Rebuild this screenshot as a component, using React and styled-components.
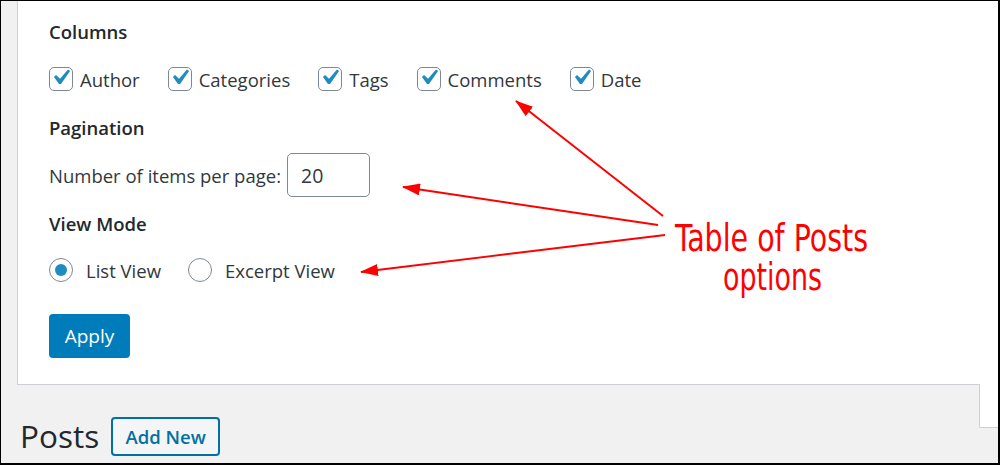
import React from 'react'
import styled, { createGlobalStyle } from 'styled-components'

const GlobalStyle = createGlobalStyle`
    body {
        margin: 0;
        font-family: "Open Sans", "Noto Sans", sans-serif;
    }
`

const Frame = styled.div`
    position: relative;
    width: 1000px;
    height: 465px;
    box-sizing: border-box;
    border-style: solid;
    border-color: #000;
    border-width: 1px 2px 2px 1px;
    background: #f1f1f1;
    overflow: hidden;
`

const Panel = styled.div`
    margin-left: 16px;
    background: #fff;
    border-left: 1px solid #ccd0d4;
    border-bottom: 1px solid #ccd0d4;
    padding: 17px 0 26px 31px;
`

const Heading = styled.h5`
    margin: ${(props) => props.top || 0}px 0 0;
    font-size: 18.5px;
    line-height: 28px;
    font-weight: 600;
    color: #23282d;
`

const Row = styled.div`
    display: flex;
    align-items: center;
    margin-top: ${(props) => props.top || 0}px;
    height: 24px;
`

const CheckLabel = styled.label`
    display: flex;
    align-items: center;
    gap: 7px;
    margin-right: 28px;
    font-size: 18.5px;
    color: #32373c;
`

const RadioLabel = styled(CheckLabel)`
    gap: 13px;
    margin-right: 27px;
`

const Box = styled.span`
    width: 24px;
    height: 24px;
    box-sizing: border-box;
    border: 1.5px solid #7e8993;
    border-radius: 5px;
    display: flex;
    align-items: center;
    justify-content: center;
    background: #fff;
    overflow: visible;

    svg {
        flex: none;
        margin: -3px 0 0 -1px;
    }
`

const Radio = styled(Box)`
    border-radius: 50%;
`

const Dot = styled.span`
    width: 12px;
    height: 12px;
    border-radius: 50%;
    background: #1e8cbe;
`

const PageRow = styled.div`
    display: flex;
    align-items: center;
    gap: 6px;
    margin-top: 11px;
    font-size: 18.5px;
    color: #32373c;
`

const NumberBox = styled.div`
    width: 83px;
    height: 44px;
    box-sizing: border-box;
    border: 1.5px solid #7e8993;
    border-radius: 5px;
    padding-left: 13px;
    display: flex;
    align-items: center;
    font-size: 19.5px;
    color: #32373c;
`

const ApplyButton = styled.button`
    display: block;
    margin-top: 32px;
    width: 81px;
    height: 44px;
    border: none;
    border-radius: 4px;
    background: #007cba;
    color: #fff;
    font-family: inherit;
    font-size: 19px;
    padding: 0;
`

const HeaderRow = styled.div`
    display: flex;
    align-items: flex-start;
`

const TitleWrap = styled.div`
    display: flex;
    align-items: center;
    gap: 12px;
    padding: 31px 0 0 19px;
`

const Title = styled.h1`
    margin: 0;
    font-size: 31.5px;
    line-height: 40px;
    font-weight: 400;
    color: #23282d;
`

const AddNew = styled.span`
    display: flex;
    align-items: center;
    justify-content: center;
    width: 109px;
    height: 39px;
    box-sizing: border-box;
    border: 2px solid #0071a1;
    border-radius: 4px;
    background: #f3f5f6;
    color: #0071a1;
    font-size: 18.5px;
    font-weight: 600;
`

const MetaTab = styled.div`
    margin-left: auto;
    margin-top: -1px;
    width: 18px;
    height: 43px;
    background: #fff;
    border-left: 1px solid #ccd0d4;
    border-bottom: 1px solid #ccd0d4;
    border-bottom-left-radius: 2px;
`

const Annotation = styled.svg`
    position: absolute;
    left: -1px;
    top: -1px;
    pointer-events: none;
`

const columns = ['Author', 'Categories', 'Tags', 'Comments', 'Date']

const Check = () => (
    <svg width="31" height="31" viewBox="0 0 20 20">
        <path fill="#1e8cbe" d="M14.83 4.89l1.34.94-5.81 8.38H9.02L5.78 9.67l1.34-1.25 2.57 2.4z" />
    </svg>
)

const arrows = [
    [663, 216, 516, 101],
    [658, 225, 403, 187],
    [665, 235, 361, 272],
]

const App = () => {
    return (
        <Frame>
            <GlobalStyle />
            <Panel>
                <Heading>Columns</Heading>
                <Row top={21}>
                    {columns.map((col) => (
                        <CheckLabel key={col}>
                            <Box><Check /></Box>
                            {col}
                        </CheckLabel>
                    ))}
                </Row>
                <Heading top={23}>Pagination</Heading>
                <PageRow>
                    Number of items per page:
                    <NumberBox>20</NumberBox>
                </PageRow>
                <Heading top={13}>View Mode</Heading>
                <Row top={20}>
                    <RadioLabel>
                        <Radio><Dot /></Radio>
                        List View
                    </RadioLabel>
                    <RadioLabel>
                        <Radio />
                        Excerpt View
                    </RadioLabel>
                </Row>
                <ApplyButton>Apply</ApplyButton>
            </Panel>
            <HeaderRow>
                <TitleWrap>
                    <Title>Posts</Title>
                    <AddNew>Add New</AddNew>
                </TitleWrap>
                <MetaTab />
            </HeaderRow>
            <Annotation width="1000" height="465" viewBox="0 0 1000 465">
                <defs>
                    <marker id="head" markerWidth="18" markerHeight="12" refX="17" refY="6" orient="auto" markerUnits="userSpaceOnUse">
                        <path d="M0 0 L18 6 L0 12 Z" fill="#ff0000" />
                    </marker>
                </defs>
                {arrows.map(([x1, y1, x2, y2], i) => (
                    <line key={i} x1={x1} y1={y1} x2={x2} y2={y2} stroke="#ff0000" strokeWidth="2" markerEnd="url(#head)" />
                ))}
                <text fill="#ff0000" fontSize="37" fontFamily="'DejaVu Sans Condensed', 'DejaVu Sans', sans-serif">
                    <tspan x="675" y="251" textLength="193" lengthAdjust="spacingAndGlyphs">Table of Posts</tspan>
                    <tspan x="723" y="290" textLength="99" lengthAdjust="spacingAndGlyphs">options</tspan>
                </text>
            </Annotation>
        </Frame>
    )
}

export default App
